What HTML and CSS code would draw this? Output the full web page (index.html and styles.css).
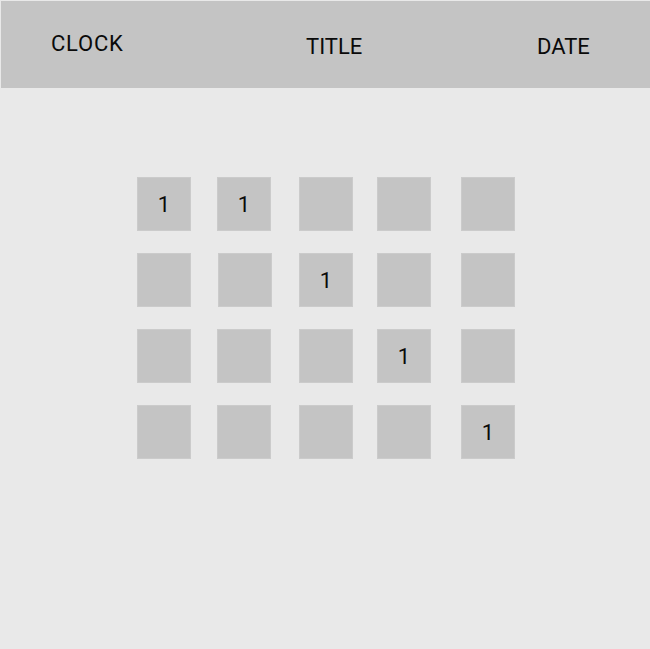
FILE: index.html
```html
<!DOCTYPE html>
<html>
<head>
<meta charset="utf-8">
<link rel="stylesheet" href="styles.css">
</head>
<body>
<header class="topbar">
  <div class="clock">CLOCK</div>
  <div class="title">TITLE</div>
  <div class="date">DATE</div>
</header>
<main class="board">
  <div class="grid">
    <div class="cell">1</div><div class="cell">1</div><div class="cell"></div><div class="cell"></div><div class="cell"></div>
    <div class="cell"></div><div class="cell nudge"></div><div class="cell">1</div><div class="cell"></div><div class="cell"></div>
    <div class="cell"></div><div class="cell"></div><div class="cell"></div><div class="cell">1</div><div class="cell"></div>
    <div class="cell"></div><div class="cell"></div><div class="cell"></div><div class="cell"></div><div class="cell">1</div>
  </div>
</main>
</body>
</html>
```
FILE: styles.css
```css
html, body {
  margin: 0;
  padding: 0;
  background: #e9e9e9;
  font-family: Roboto, "Liberation Sans", sans-serif;
  color: #0a0a0a;
}
body {
  width: 650px;
  height: 649px;
  overflow: hidden;
}
.topbar {
  margin: 1px 0 0 1px;
  height: 87px;
  background: #c4c4c4;
  display: grid;
  grid-template-columns: 255px 231px auto;
  padding-left: 50px;
  font-size: 22px;
  line-height: 26px;
}
.clock { padding-top: 30px; letter-spacing: 0.8px; }
.title { padding-top: 33px; }
.date  { padding-top: 33px; }
.board {
  padding: 89px 0 0 137px;
}
.grid {
  display: grid;
  grid-template-columns: 80px 82px 78px 84px 54px;
  grid-auto-rows: 54px;
  row-gap: 22px;
}
.cell {
  width: 54px;
  height: 54px;
  box-sizing: border-box;
  background: #c4c4c4;
  border: 1px solid #cbcbcb;
  display: flex;
  align-items: center;
  justify-content: center;
  font-size: 22px;
}
.nudge { margin-left: 1px; }
```
